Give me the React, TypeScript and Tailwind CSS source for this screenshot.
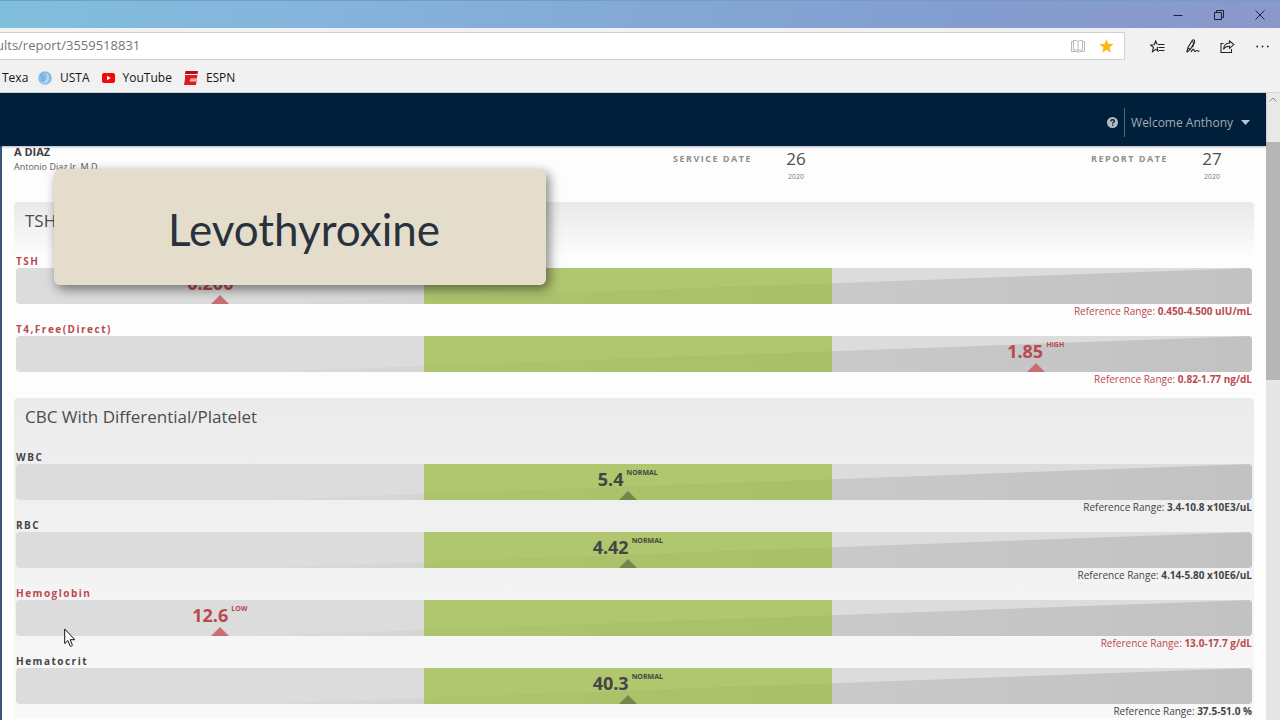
import React from "react";

type Status = "LOW" | "NORMAL" | "HIGH";

interface Result {
  name: string;
  value: string;
  status: Status;
  range: string;
}

interface Panel {
  title: string;
  fade: string;
  results: Result[];
}

const panels: Panel[] = [
  {
    title: "TSH+Free T4",
    fade: "bg-[linear-gradient(to_bottom,#e9e9e9,#fdfdfd_56px)]",
    results: [
      { name: "TSH", value: "0.200", status: "LOW", range: "0.450-4.500 uIU/mL" },
      { name: "T4,Free(Direct)", value: "1.85", status: "HIGH", range: "0.82-1.77 ng/dL" },
    ],
  },
  {
    title: "CBC With Differential/Platelet",
    fade: "bg-[linear-gradient(to_bottom,#ebebeb,#f9f9f9)]",
    results: [
      { name: "WBC", value: "5.4", status: "NORMAL", range: "3.4-10.8 x10E3/uL" },
      { name: "RBC", value: "4.42", status: "NORMAL", range: "4.14-5.80 x10E6/uL" },
      { name: "Hemoglobin", value: "12.6", status: "LOW", range: "13.0-17.7 g/dL" },
      { name: "Hematocrit", value: "40.3", status: "NORMAL", range: "37.5-51.0 %" },
    ],
  },
];

const zoneOf: Record<Status, string> = {
  LOW: "left-0",
  NORMAL: "left-[33%]",
  HIGH: "left-[66%]",
};

function ResultRow({ result, id }: { result: Result; id: string }) {
  const normal = result.status === "NORMAL";
  const tone = normal ? "text-[#454545]" : "text-[#bb4a4e]";
  return (
    <div className={`mb-1 px-0.5 ${tone}`}>
      <h3 className="h-3.5 text-[10px] leading-3.5 font-bold tracking-[1.5px]">{result.name}</h3>
      <div className="relative h-9 overflow-hidden rounded-sm bg-[#dcdcdc]">
        <svg className="absolute inset-0 h-full w-full" viewBox="0 0 1236 36" preserveAspectRatio="none" aria-hidden="true">
          <defs>
            <linearGradient id={id} x1="0" x2="1" y1="0" y2="0">
              <stop offset="0" stopColor="#dadada" />
              <stop offset="0.6" stopColor="#c9c9c9" />
              <stop offset="1" stopColor="#c2c2c2" />
            </linearGradient>
          </defs>
          <path d="M236 36 L1236 0 V36 Z" fill={`url(#${id})`} />
        </svg>
        <div className="absolute inset-y-0 left-[33%] w-[33%] bg-[rgba(147,183,38,0.6)]" />
        <div className={`absolute inset-y-0 flex w-[33%] flex-col items-center justify-between pt-1 ${zoneOf[result.status]}`}>
          <div className="flex items-start gap-[3px]">
            <span className="text-[18px] leading-[22px] font-bold">{result.value}</span>
            <span className="text-[7px] leading-[10px] font-bold">{result.status}</span>
          </div>
          <svg className={normal ? "text-[#75864b]" : "text-[#c96e70]"} width="18" height="9" viewBox="0 0 18 9" aria-hidden="true">
            <path d="M0 9 L9 0 L18 9 Z" fill="currentColor" />
          </svg>
        </div>
      </div>
      <p className="h-3.5 text-right text-[10px] leading-3.5">
        Reference Range: <b>{result.range}</b>
      </p>
    </div>
  );
}

function DateBlock({ label, day }: { label: string; day: string }) {
  return (
    <div className="flex justify-end gap-[34px] pr-8">
      <span className="pt-1.5 text-[9px] leading-3.5 font-bold tracking-[1.5px] text-[#8e8e8e]">{label}</span>
      <div className="flex w-5 flex-col items-center">
        <span className="text-[17px] leading-[26px] text-[#4e4e4e]">{day}</span>
        <span className="text-[7px] leading-2.5 text-[#7c7c7c]">2020</span>
      </div>
    </div>
  );
}

const iconButton = "flex h-6 w-[35px] items-center justify-center text-[#222]";

function TitleBar() {
  return (
    <div className="flex h-7 shrink-0 justify-end border-t border-[#6f9fc4] bg-[linear-gradient(to_right,#80bfdc,#85b4dc_25%,#839dd0_75%,#8b98cb)] text-[#1b2233]">
      <button aria-label="Minimize" className="flex w-[41px] items-center justify-center">
        <svg width="10" height="10" viewBox="0 0 10 10"><path d="M0.5 5.5h9" stroke="currentColor" /></svg>
      </button>
      <button aria-label="Restore" className="flex w-[41px] items-center justify-center">
        <svg width="10" height="10" viewBox="0 0 10 10" fill="none" stroke="currentColor"><path d="M0.5 2.5h7v7h-7zM2.5 2.5v-2h7v7h-2" /></svg>
      </button>
      <button aria-label="Close" className="flex w-[41px] items-center justify-center">
        <svg width="10" height="10" viewBox="0 0 10 10" stroke="currentColor"><path d="M0.5 0.5l9 9M9.5 0.5l-9 9" /></svg>
      </button>
    </div>
  );
}

function Toolbar() {
  return (
    <div className="flex h-8 shrink-0 items-end">
      <div className="flex h-7 flex-1 items-center overflow-hidden border border-l-0 border-[#d2d2d2] bg-white">
        <input
          aria-label="Address"
          className="-ml-1 min-w-0 flex-1 bg-transparent text-[13px] text-[#757575] outline-none"
          defaultValue="ults/report/3559518831"
        />
        <button aria-label="Reading view" className="flex w-[29px] justify-center text-[#b9b9b9]">
          <svg width="14" height="13" viewBox="0 0 14 13" fill="none" stroke="currentColor">
            <path d="M0.5 1.5h2v-1h3l1.5 1 1.5-1h3v1h2v10H8.5l-1.500 1-1.500-1h-5zM2.500 1.500v8.500h3l1.500 1 1.500-1h3V1.500M7 1.500v9.500" />
          </svg>
        </button>
        <button aria-label="Favorite" className="mr-1 flex w-[28px] justify-center">
          <svg width="15" height="14" viewBox="0 0 15 14">
            <path d="M7.500 0l1.900 4.900 5.300.2-4.200 3.300 1.500 5.300-4.500-3-4.500 3 1.500-5.300L.3 5.100l5.300-.2z" fill="#fbb90e" />
          </svg>
        </button>
      </div>
      <div className="flex items-center pb-0.5 pl-[15px]">
        <button aria-label="Hub" className={iconButton}>
          <svg width="15" height="13" viewBox="0 0 15 13" fill="none" stroke="currentColor" strokeWidth="1.1">
            <path d="M8 4.500h6.500M9 7.500h5.500M9 10.500h5.500M7.200 4.500L5.700.9 4.200 4.700.6 5l2.800 2.400-.9 4.300 3.200-2.300 2.200 1.500-.7-3 1.200-1" />
          </svg>
        </button>
        <button aria-label="Notes" className={iconButton}>
          <svg width="14" height="14" viewBox="0 0 14 14" fill="none" stroke="currentColor" strokeWidth="1.1">
            <path d="M.8 13.200L2 8.500 6.200 1.500q1.300-1.500 2.300 0 .4.900-.1 1.800L4.300 10.500.8 13.200M5.800 2.300l2.300 1.400M8.400 3.500L6.500 8.200M2 9l2 1.300M5 13c1.500-3.200 3-3.200 3.200-1.700s.8 1.500 1.800.5 1.500.8 3.500.2" />
          </svg>
        </button>
        <button aria-label="Share" className={iconButton}>
          <svg width="15" height="13" viewBox="0 0 15 13" fill="none" stroke="currentColor" strokeWidth="1.1">
            <path d="M3.500 3.500H1v9h10.500V9M9.500.9l4.300 3.700-4.300 3.700V6.200C6.500 6 4.800 7 3.500 9.300 3.700 5.500 6 3.200 9.500 3z" />
          </svg>
        </button>
        <button aria-label="More" className={iconButton}>
          <svg width="13" height="3" viewBox="0 0 13 3" fill="currentColor">
            <circle cx="1.200" cy="1.500" r=".9" /><circle cx="6.500" cy="1.500" r=".9" /><circle cx="11.800" cy="1.500" r=".9" />
          </svg>
        </button>
      </div>
    </div>
  );
}

function Favorites() {
  return (
    <nav aria-label="Favorites" className="flex h-[33px] shrink-0 items-center border-b border-[#d5d5d5] pt-1 text-[12px] text-[#161616]">
      <a href="#texas" className="ml-0.5 w-[26px] overflow-hidden whitespace-nowrap">Texas</a>
      <a href="#usta" className="ml-2.5 flex items-center gap-2">
        <svg width="14" height="14" viewBox="0 0 14 14">
          <circle cx="7" cy="7" r="6.800" fill="#85bce8" />
          <path d="M6 1.500a5.600 5.600 0 0 1 2 10.500 5.500 5.500 0 0 1-5-1 5.500 5.500 0 0 0 6-4.500Q9 3 6 1.500z" fill="#b9daf4" />
          <path d="M2 3q4 2 4 8" fill="none" stroke="#5f9fd8" strokeWidth=".8" />
        </svg>
        USTA
      </a>
      <a href="#youtube" className="ml-3 flex items-center gap-2">
        <svg width="13" height="10" viewBox="0 0 13 10">
          <rect width="13" height="10" rx="2" fill="#f00a0a" />
          <path d="M5 2.800L8.800 5 5 7.200z" fill="#fff" />
        </svg>
        YouTube
      </a>
      <a href="#espn" className="ml-3 flex items-center gap-2">
        <svg width="14" height="14" viewBox="0 0 14 14">
          <path d="M1.500 0H14l-.5 3H1z" fill="#b80d14" />
          <path d="M1 4h12.500l-.6 3.500H6.500l-.2 1h6.400L12 14H0l1-6z" fill="#dc1a20" />
          <path d="M6 8.500h6.700l-.3 2H5.700z" fill="#f3b5b5" />
        </svg>
        ESPN
      </a>
    </nav>
  );
}

function SiteHeader() {
  return (
    <header className="z-10 flex h-[53px] shrink-0 items-center justify-end bg-[#001f3b] pt-1.5 pr-4 shadow-[0_1px_2px_rgba(0,0,40,0.3)]">
      <button aria-label="Help" className="mr-1.5">
        <svg width="11" height="11" viewBox="0 0 11 11">
          <circle cx="5.500" cy="5.500" r="5.500" fill="#b4bac0" />
          <path d="M3.700 4.300q.2-1.700 1.900-1.700 1.800.1 1.800 1.500 0 .8-.9 1.300-.8.400-.8 1.200M5.700 7.500v1.300" fill="none" stroke="#001f3b" strokeWidth="1.400" />
        </svg>
      </button>
      <button className="flex h-[29px] items-center gap-2 border-l border-[#53677c] pl-1.5 text-[12px] text-[#a3abb3]">
        Welcome Anthony
        <svg width="9" height="5" viewBox="0 0 9 5"><path d="M0 0h9L4.500 5z" fill="#b9c3d6" /></svg>
      </button>
    </header>
  );
}

export default function App() {
  return (
    <div className="relative flex h-screen flex-col overflow-hidden bg-[#f1f1f1] font-['Open_Sans','Noto_Sans',sans-serif]">
      <TitleBar />
      <Toolbar />
      <Favorites />
      <div className="flex min-h-0 flex-1">
        <div className="flex min-w-0 flex-1 flex-col">
          <SiteHeader />
          <main className="min-h-0 flex-1 overflow-hidden border-l-2 border-[#3c5474] bg-[#fdfdfd] pr-3 pl-1">
            <section className="grid h-14 grid-cols-3">
              <div className="pl-2">
                <p className="text-[11px] leading-3 font-bold text-[#3e3e3e]">A DIAZ</p>
                <p className="pt-0.5 text-[9px] leading-3.5 text-[#5c5c5c]">Antonio Diaz Jr. M.D.</p>
              </div>
              <DateBlock label="SERVICE DATE" day="26" />
              <DateBlock label="REPORT DATE" day="27" />
            </section>
            {panels.map((panel, p) => (
              <section key={panel.title} className={`mb-3 ml-2 rounded-sm ${panel.fade}`}>
                <h2 className="h-[52px] pt-1.5 pl-[11px] text-[17px] leading-[26px] text-[#4c4c4c]">{panel.title}</h2>
                {panel.results.map((result, r) => (
                  <ResultRow key={result.name} result={result} id={`ramp-${p}-${r}`} />
                ))}
              </section>
            ))}
          </main>
        </div>
        <div className="flex w-3.5 shrink-0 flex-col bg-[#e6e6e6]">
          <div className="flex h-[49px] justify-center bg-[#e9e9e9] pt-1">
            <svg width="8" height="5" viewBox="0 0 8 5"><path d="M.5 4.500L4 1l3.500 3.500" fill="none" stroke="#8b8b8b" /></svg>
          </div>
          <div className="h-[38%] bg-[#b6b6b6]" />
        </div>
      </div>
      <aside className="absolute top-[169px] left-[54px] z-20 flex h-[116px] w-[492px] items-center justify-center rounded-md bg-[#e4ddcc] pt-1 pl-2 font-['Lato',sans-serif] text-[44px] text-[#28323c] shadow-[3px_4px_12px_rgba(0,0,0,0.5)]">
        Levothyroxine
      </aside>
      <svg className="absolute top-[628px] left-[64px] z-20" width="12" height="20" viewBox="0 0 12 20" aria-hidden="true">
        <path d="M.7 1v14.500l3.200-3 2.300 5.600q1 .9 2.200-.8L6.200 11.700h4.600z" fill="#fff" stroke="#111" />
      </svg>
    </div>
  );
}
